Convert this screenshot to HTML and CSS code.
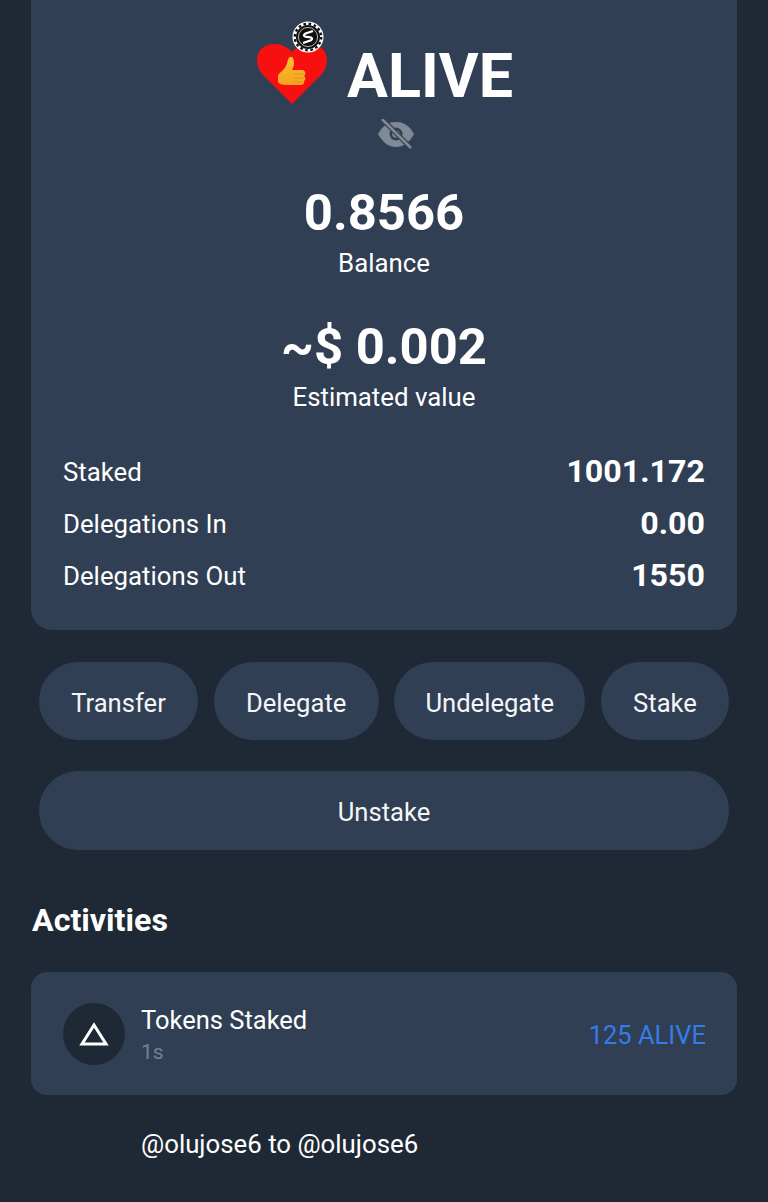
FILE: index.html
```html
<!DOCTYPE html>
<html>
	<head>
		<meta charset="UTF-8">
		<title>ALIVE</title>
		<link rel="stylesheet" href="styles.css">
	</head>
	<body>
		<div class="page">
			<div class="card">
				<div class="head">
					<div class="logo">
						<svg class="heart" width="72" height="72" viewBox="0 0 72 72">
							<defs>
								<linearGradient id="thumb" x1="0" y1="0" x2="0" y2="1">
									<stop offset="0" stop-color="#fcc02e"/>
									<stop offset="1" stop-color="#f4a21f"/>
								</linearGradient>
							</defs>
							<path d="M36 65 L7 36 C3 31 1 27 1 21 C1 11 9 5 18 5 C25 5 32 8 36 13 C40 8 47 5 54 5 C63 5 71 11 71 21 C71 27 69 31 65 36 Z" fill="#f80f0f"/>
							<path d="M22 36 C24 33 28 31 30 27 C32 24 31 20 34 18 C37 17 38 21 38 24 C38 27 37 29 36 31 L46 31 C50 31 50 36 48 37 C50 38 50 41 48 42 C49 44 47 46 45 46 L30 46 C26 46 23 45 22 43 Z" fill="url(#thumb)"/>
							<path d="M38 35 H48 M38 39 H48 M38 43 H47" stroke="#e0901a" stroke-width="0.8" fill="none"/>
						</svg>
						<svg class="badge" width="32" height="32" viewBox="0 0 32 32">
							<circle cx="16" cy="16" r="15.5" fill="#fff"/>
							<circle cx="16" cy="16" r="13.2" fill="none" stroke="#111" stroke-width="2.4" stroke-dasharray="2.6 2.6"/>
							<circle cx="16" cy="16" r="12" fill="#111"/>
							<circle cx="16" cy="16" r="9.6" fill="none" stroke="#c9c9c9" stroke-width="0.9"/>
							<path d="M21 10 L13 12.8 Q10.5 14.5 13.5 15.6 L18.5 16.4 Q21.5 17.5 19 19.2 L11 22" fill="none" stroke="#fff" stroke-width="2.2"/>
						</svg>
					</div>
					<span class="symbol">ALIVE</span>
				</div>
				<svg class="eye" width="38" height="30" viewBox="0 0 38 30">
					<path d="M1 15 C6 6 12 3 19 3 C26 3 32 6 37 15 C32 24 26 28 19 28 C12 28 6 24 1 15 Z" fill="#7f8a96"/>
					<circle cx="19" cy="15" r="6.5" fill="#303f54"/>
					<circle cx="19" cy="15" r="3.8" fill="#7f8a96"/>
					<path d="M5 0 L34 29" stroke="#303f54" stroke-width="5"/>
					<path d="M5 0 L34 29" stroke="#7f8a96" stroke-width="2.6"/>
				</svg>
				<div class="stat">
					<div class="stat-value">0.8566</div>
					<div class="stat-label">Balance</div>
				</div>
				<div class="stat">
					<div class="stat-value">~$ 0.002</div>
					<div class="stat-label">Estimated value</div>
				</div>
				<div class="rows">
					<div class="row"><span>Staked</span><b>1001.172</b></div>
					<div class="row"><span>Delegations In</span><b>0.00</b></div>
					<div class="row"><span>Delegations Out</span><b>1550</b></div>
				</div>
			</div>
			<div class="actions">
				<div class="btn btn-transfer">Transfer</div>
				<div class="btn btn-delegate">Delegate</div>
				<div class="btn btn-undelegate">Undelegate</div>
				<div class="btn btn-stake">Stake</div>
				<div class="btn btn-wide">Unstake</div>
			</div>
			<h2 class="title">Activities</h2>
			<div class="activity">
				<div class="circle">
					<svg width="30" height="24" viewBox="0 0 30 24">
						<path d="M15 3 L27 22 H3 Z" fill="none" stroke="#fff" stroke-width="3"/>
					</svg>
				</div>
				<div class="activity-text">
					<div class="activity-name">Tokens Staked</div>
					<div class="activity-time">1s</div>
				</div>
				<div class="activity-amount">125 ALIVE</div>
			</div>
			<div class="memo">@olujose6 to @olujose6</div>
		</div>
	</body>
</html>
```

FILE: styles.css
```css
*{
	margin: 0;
	padding: 0;
	box-sizing: border-box;
}
html,body{
	height: 100%;
	overflow: hidden;
}
body{
	background: #1f2936;
	font-family: Roboto, "Liberation Sans", sans-serif;
	color: #fff;
}
.page{
	padding: 0 31px 0 31px;
}
.card{
	margin-top: -20px;
	height: 650px;
	background: #303f54;
	border-radius: 21px;
	padding: 20px 32px 0 32px;
	display: flex;
	flex-direction: column;
	align-items: center;
}
.head{
	display: flex;
	align-items: flex-start;
	height: 114px;
	padding-top: 22px;
}
.logo{
	width: 72px;
	height: 92px;
	position: relative;
	margin-right: 19px;
	margin-left: 1px;
}
.heart{
	display: block;
	margin-top: 17px;
}
.badge{
	position: absolute;
	left: 36px;
	top: -1px;
}
.symbol{
	font-size: 61px;
	line-height: 62px;
	font-weight: 700;
	margin-top: 23px;
}
.eye{
	display: block;
	margin-top: 5px;
	margin-left: 23px;
}
.stat{
	text-align: center;
	margin-top: 21px;
	height: 113px;
}
.eye + .stat{
	margin-top: 36px;
}
.stat-value{
	font-size: 50.8px;
	line-height: 55px;
	font-weight: 700;
}
.stat-label{
	font-size: 25.8px;
	line-height: 32px;
	margin-top: 7px;
}
.rows{
	width: 100%;
	margin-top: 14px;
}
.row{
	display: flex;
	justify-content: space-between;
	align-items: center;
	height: 52px;
	font-size: 25.8px;
}
.row b{
	font-size: 32.2px;
	font-weight: 700;
	margin-bottom: 2px;
}
.actions{
	display: flex;
	flex-wrap: wrap;
	justify-content: space-between;
	margin: 32px 8px 0 8px;
	row-gap: 31px;
}
.btn{
	height: 78px;
	border-radius: 39px;
	background: #303f54;
	font-size: 25.6px;
	padding-top: 3px;
	display: flex;
	align-items: center;
	justify-content: center;
	color: #f4f6f8;
}
.btn-transfer{
	width: 159px;
}
.btn-delegate{
	width: 165px;
}
.btn-undelegate{
	width: 191px;
}
.btn-stake{
	width: 128px;
}
.btn-wide{
	width: 100%;
	height: 79px;
}
.title{
	font-size: 32.2px;
	line-height: 40px;
	font-weight: 700;
	margin-top: 50px;
	padding-left: 1px;
}
.activity{
	margin-top: 32px;
	height: 123px;
	background: #303f54;
	border-radius: 16px;
	padding: 0 31px 0 32px;
	display: flex;
	align-items: center;
}
.circle{
	width: 62px;
	height: 62px;
	border-radius: 50%;
	background: #1f2936;
	display: flex;
	align-items: center;
	justify-content: center;
	margin-right: 16px;
}
.activity-text{
	flex: 1;
	padding-top: 2px;
}
.activity-name{
	font-size: 25.5px;
	line-height: 32px;
}
.activity-time{
	font-size: 21px;
	line-height: 28px;
	color: #76818f;
	margin-top: 2px;
}
.activity-amount{
	font-size: 25.5px;
	color: #357ce6;
	padding-top: 3px;
}
.memo{
	font-size: 25.8px;
	line-height: 32px;
	margin: 33px 0 0 110px;
}
```
